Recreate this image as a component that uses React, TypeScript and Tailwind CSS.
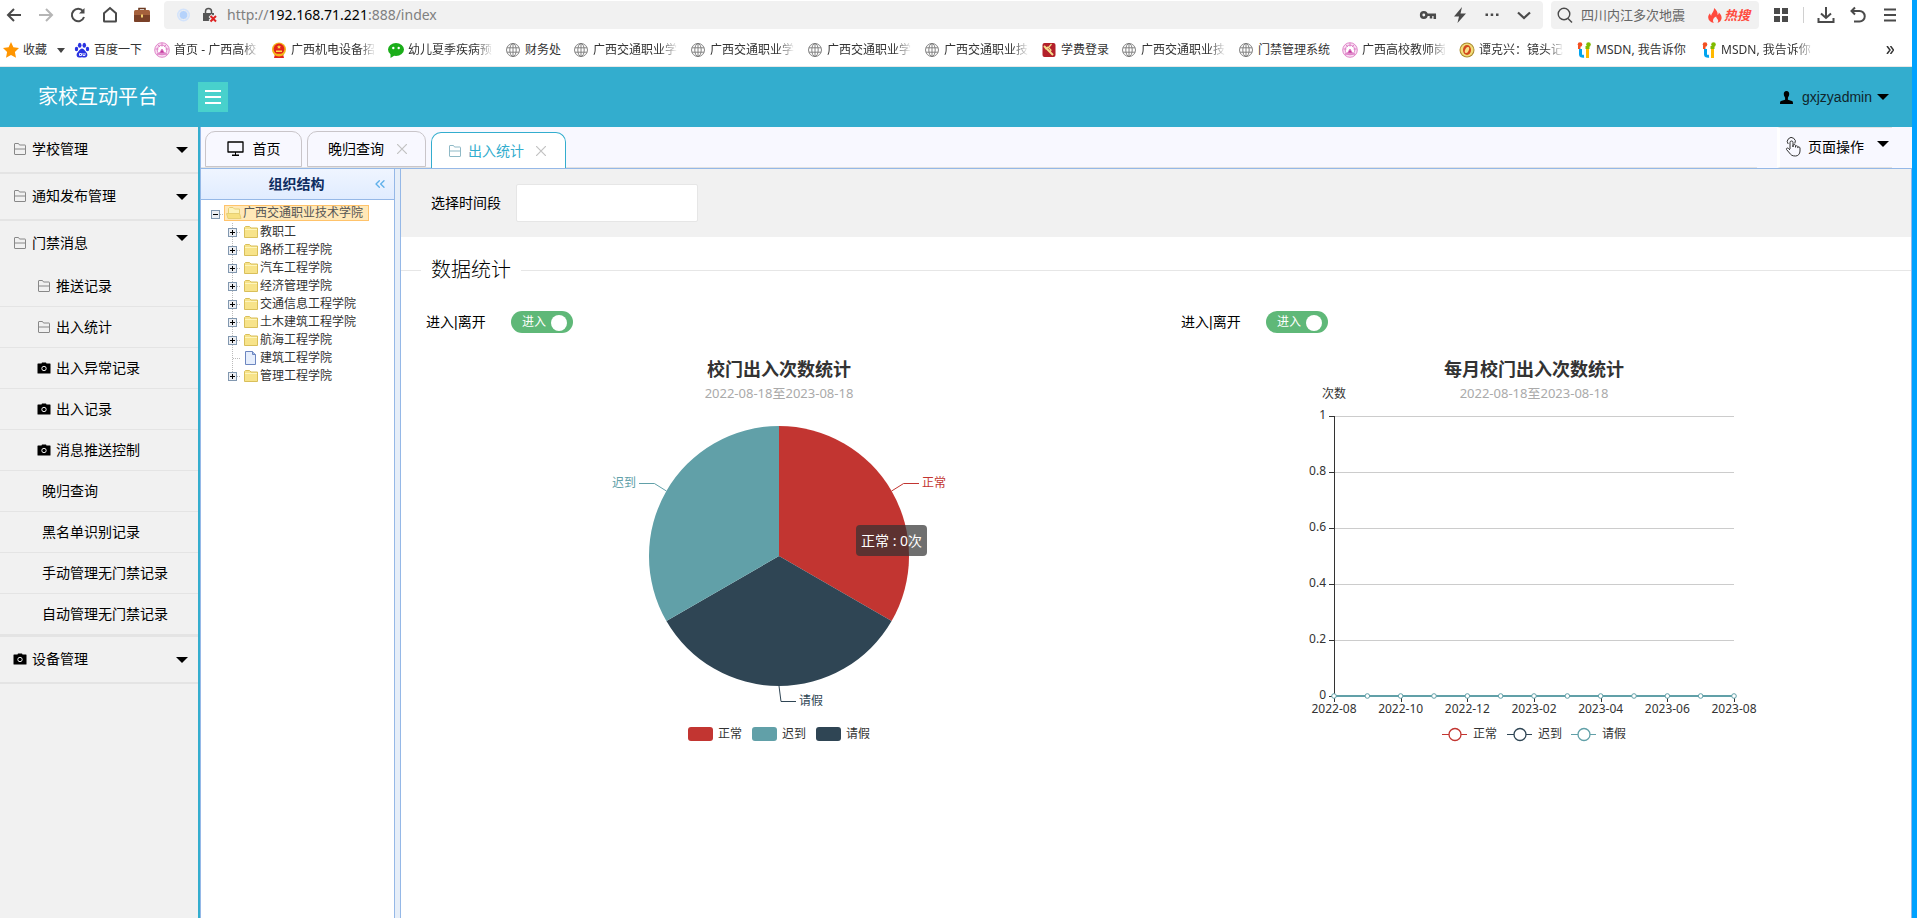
import { useState } from 'react';
import type { ReactNode } from 'react';
import clsx from 'clsx';
import { ChevronsLeft } from 'lucide-react';

type MenuItem = { label: string; icon?: 'folder' | 'camera' };

const SUB_MENU: MenuItem[] = [
  { label: '推送记录', icon: 'folder' },
  { label: '出入统计', icon: 'folder' },
  { label: '出入异常记录', icon: 'camera' },
  { label: '出入记录', icon: 'camera' },
  { label: '消息推送控制', icon: 'camera' },
  { label: '晚归查询' },
  { label: '黑名单识别记录' },
  { label: '手动管理无门禁记录' },
  { label: '自动管理无门禁记录' },
];

const DEPARTMENTS = [
  { name: '教职工' },
  { name: '路桥工程学院' },
  { name: '汽车工程学院' },
  { name: '经济管理学院' },
  { name: '交通信息工程学院' },
  { name: '土木建筑工程学院' },
  { name: '航海工程学院' },
  { name: '建筑工程学院', leaf: true },
  { name: '管理工程学院' },
];

type Site = 'baidu' | 'pink' | 'emblem' | 'wechat' | 'globe' | 'tuition' | 'gold' | 'msdn';

const BOOKMARKS: { icon: Site; label: string; cut?: boolean }[] = [
  { icon: 'baidu', label: '百度一下' },
  { icon: 'pink', label: '首页 - 广西高校', cut: true },
  { icon: 'emblem', label: '广西机电设备招', cut: true },
  { icon: 'wechat', label: '幼儿夏季疾病预', cut: true },
  { icon: 'globe', label: '财务处' },
  { icon: 'globe', label: '广西交通职业学', cut: true },
  { icon: 'globe', label: '广西交通职业学', cut: true },
  { icon: 'globe', label: '广西交通职业学', cut: true },
  { icon: 'globe', label: '广西交通职业技', cut: true },
  { icon: 'tuition', label: '学费登录' },
  { icon: 'globe', label: '广西交通职业技', cut: true },
  { icon: 'globe', label: '门禁管理系统' },
  { icon: 'pink', label: '广西高校教师岗', cut: true },
  { icon: 'gold', label: '谭克兴：镜头记', cut: true },
  { icon: 'msdn', label: 'MSDN, 我告诉你' },
  { icon: 'msdn', label: 'MSDN, 我告诉你' },
];

const RED = '#c23531';
const NAVY = '#2f4554';
const TEAL = '#61a0a8';

export default function App() {
  const [menuOpen, setMenuOpen] = useState(true);

  return (
    <div className="flex h-screen flex-col border-r-5 border-[#00a2ff] bg-white font-['Noto_Sans','Noto_Sans_CJK_SC',sans-serif] text-sm text-black">
      <Toolbar />
      <Bookmarks />
      <header className="flex h-15 shrink-0 items-center bg-[#33adce]">
        <h1 className="w-[198px] pl-[38px] text-xl text-white">家校互动平台</h1>
        <button
          aria-label="菜单"
          onClick={() => setMenuOpen(!menuOpen)}
          className="flex size-[30px] items-center justify-center bg-[#48d1cc]"
        >
          <svg width="18" height="16" viewBox="0 0 18 16" fill="#fff">
            <path d="M1 1h16v2H1zM1 7h16v2H1zM1 13h16v2H1z" />
          </svg>
        </button>
        <button className="ml-auto flex items-center pr-[23px] font-['Liberation_Sans',sans-serif] text-[#10262d]">
          <svg width="13" height="13" viewBox="0 0 13 13" className="mr-[9px]" fill="#000">
            <path d="M6.5 0C8.400 0 9.400 1.400 9.200 3.300 9.100 5 8.300 6 7.900 6.800v2L12 10c.800.400 1 1 1 3H0c0-2 .2-2.600 1-3l4.100-1.200v-2C4.700 6 3.900 5 3.800 3.300 3.600 1.400 4.600 0 6.500 0z" />
          </svg>
          gxjzyadmin
          <Caret className="ml-[5px]" />
        </button>
      </header>

      <div className="flex min-h-0 flex-1">
        {menuOpen && <Sidebar />}
        <div className="flex min-w-0 flex-1 flex-col border-l border-[#95b8e7]">
          <Tabs />
          <div className="flex min-h-0 flex-1 border-t border-[#95b8e7]">
            <OrgTree />
            <div className="w-[5px] shrink-0 bg-[#e6eef8]" />
            <Statistics />
          </div>
        </div>
      </div>
    </div>
  );
}

function Caret({ className }: { className?: string }) {
  return (
    <span
      className={clsx(
        'size-0 shrink-0 border-x-6 border-t-6 border-x-transparent border-t-black',
        className
      )}
    />
  );
}

/* ---------- browser bars ---------- */

function Toolbar() {
  return (
    <div className="flex h-[30px] shrink-0 items-center py-px text-[#4a4a4a]">
      <div className="flex w-[164px] shrink-0 items-center gap-[14px] pl-[5px]">
        <BarButton label="后退">
          <path d="M16 9H3M9 3L3 9l6 6" />
        </BarButton>
        <BarButton label="前进" className="text-[#b5b5b5]">
          <path d="M2 9h13M9 3l6 6-6 6" />
        </BarButton>
        <BarButton label="刷新">
          <path d="M14 5.200A6.200 6.200 0 1 0 15 11" />
          <path d="M15.500 2v5.500H10z" fill="currentColor" stroke="none" />
        </BarButton>
        <BarButton label="主页">
          <path d="M3 7.200L9 2l6 5.200V15q0 .5-.5.500h-11Q3 15.500 3 15z" />
        </BarButton>
        <button aria-label="工具箱">
          <svg width="18" height="18" viewBox="0 0 18 18">
            <path d="M6 5V2.500h6V5" fill="none" stroke="#6b3a22" strokeWidth="1.600" />
            <rect x="1" y="4" width="16" height="12" rx="1.500" fill="#a5613c" />
            <path d="M1 9h16v5.500a1.500 1.500 0 0 1-1.500 1.500h-13A1.500 1.500 0 0 1 1 14.500z" fill="#7a4128" />
            <path d="M8 8.500h2v3H8z" fill="#f3cf6e" />
          </svg>
        </button>
      </div>
      <div className="flex h-7 flex-1 items-center rounded bg-[#f1f1f1] pr-[10px]">
        <svg width="16" height="16" viewBox="0 0 16 16" className="ml-3">
          <circle cx="7.500" cy="8" r="6.500" fill="#d3e3fb" />
          <circle cx="7.500" cy="8" r="4.500" fill="#b5d2fb" stroke="#f1f1f1" />
        </svg>
        <svg width="16" height="16" viewBox="0 0 16 16" className="ml-[10px]">
          <path d="M3.500 6V4.500a3 3 0 0 1 6 0V6" fill="none" stroke="#555" strokeWidth="1.500" />
          <path d="M1 6h11v8H1z" fill="#555" />
          <path d="M8 8.500l6 6M14 8.500l-6 6" stroke="#f1f1f1" strokeWidth="4" />
          <path d="M8.500 9l5.500 5.500M14 9l-5.500 5.500" stroke="#d22" strokeWidth="2" />
        </svg>
        <span className="ml-[9px] flex-1 text-sm text-[#808080]">
          http://<span className="text-black">192.168.71.221</span>:888/index
        </span>
        <div className="flex items-center gap-[14px]">
          <BarButton label="密码">
            <g strokeWidth="2.500">
              <circle cx="4.800" cy="9" r="2.700" />
              <path d="M7.500 8.800h9.500M15.800 8.500v4.500M12 8.500v4" />
            </g>
          </BarButton>
          <BarButton label="加速">
            <path d="M11 1L3 10.500h5L6.500 17 15 7.500H9.500z" fill="currentColor" stroke="none" />
          </BarButton>
          <BarButton label="更多">
            <path d="M2.500 7.500H5V10H2.500zM7.700 7.500h2.500V10H7.700zM13 7.500h2.500V10H13z" fill="currentColor" stroke="none" />
          </BarButton>
          <BarButton label="展开">
            <path d="M3 6.500l6 5.500 6-5.500" strokeWidth="2.200" />
          </BarButton>
        </div>
      </div>
      <div className="ml-2 flex h-7 w-[208px] items-center rounded bg-[#f1f1f1] pl-[5px]">
        <BarButton label="搜索">
          <g strokeWidth="1.400">
            <circle cx="8" cy="8" r="5.800" />
            <path d="M12 12.500l4 4" />
          </g>
        </BarButton>
        <span className="ml-[7px] text-[13px] text-[#666]">四川内江多次地震</span>
        <span className="ml-auto flex items-center gap-0.5 pr-[9px] text-[13px] font-bold text-[#ff4a3d] italic">
          <svg width="14" height="15" viewBox="0 0 14 15" fill="#ff4a3d">
            <path d="M6 0c2.500 2 4 4.200 3.600 7 .8-.500 1.200-1.500 1.200-2.500C13 6.500 14 8.500 13.500 10.800c-.5 2.200-2 3.600-4 4.200 1-1.500 1-3-.3-4.200-.6-.600-1-1.400-1-2.300C6 9.500 5 11 5 12.500c0 1 .3 1.800.8 2.500C2.500 14.500.3 12.300.2 9.500.1 7.800.9 6.500 2 5.300c.1 1.200.5 2 1.200 2.500C3.400 5 6.300 3.500 6 0z" />
          </svg>
          热搜
        </span>
      </div>
      <div className="flex items-center px-[13px]">
        <BarButton label="应用">
          <path d="M2 2h6v6H2zM10 2h6v6h-6zM2 10h6v6H2zM10 10h6v6h-6z" fill="currentColor" stroke="none" />
        </BarButton>
        <span className="mx-[13px] h-4 w-px bg-[#d0d0d0]" />
        <div className="flex items-center gap-[14px]">
          <BarButton label="下载">
            <path d="M9 1v11M4 7.500L9 12l5-4.500M1.500 12v4h15v-4" />
          </BarButton>
          <BarButton label="恢复">
            <path d="M6 1.500L2.500 5 6 8.500M3 5h7.500a5 5 0 0 1 0 10.500H5" />
          </BarButton>
          <BarButton label="浏览器菜单">
            <path d="M3 3.500h12M3 9h12M3 14.500h12" />
          </BarButton>
        </div>
      </div>
    </div>
  );
}

function BarButton({ label, className, children }: { label: string; className?: string; children: ReactNode }) {
  return (
    <button aria-label={label} className={className}>
      <svg width="18" height="18" viewBox="0 0 18 18" fill="none" stroke="currentColor" strokeWidth="2">
        {children}
      </svg>
    </button>
  );
}

function Bookmarks() {
  return (
    <nav className="flex h-[37px] shrink-0 items-center border-b border-[#e8e8e8] pt-1 pl-[3px] text-xs whitespace-nowrap text-[#333]">
      <button className="mr-[9px] flex items-center gap-1">
        <svg width="16" height="16" viewBox="0 0 16 16" fill="#ff9500">
          <path d="M8 0l2.400 5.300 5.600.700-4.100 3.900 1.100 5.800L8 12.900l-5 2.800 1.100-5.800L0 6l5.600-.700z" />
        </svg>
        收藏
        <span className="ml-[6px] border-x-4 border-t-5 border-x-transparent border-t-[#444]" />
      </button>
      <div className="flex items-center gap-3">
        {BOOKMARKS.map((b, i) => (
          <a key={i} href="#" className="flex items-center gap-1">
            <SiteIcon site={b.icon} />
            <span
              className={clsx(
                'overflow-hidden',
                b.cut && 'w-[85px] mask-r-from-80% mask-r-to-100%',
                b.icon === 'msdn' && 'w-[93px]',
                i === BOOKMARKS.length - 1 && 'mask-r-from-80% mask-r-to-100%'
              )}
            >
              {b.label}
            </span>
          </a>
        ))}
      </div>
      <button aria-label="更多书签" className="mr-[18px] ml-auto">
        <svg width="8" height="8" viewBox="0 0 8 8" fill="none" stroke="#333" strokeWidth="1.500">
          <path d="M1 0l3 4-3 4M4.500 0l3 4-3 4" />
        </svg>
      </button>
    </nav>
  );
}

function SiteIcon({ site }: { site: Site }) {
  return (
    <svg width="16" height="16" viewBox="0 0 16 16" className="shrink-0">
      {site === 'globe' && (
        <g fill="none" stroke="#777" strokeWidth=".9">
          <circle cx="8" cy="8" r="6.500" />
          <ellipse cx="8" cy="8" rx="3.200" ry="6.500" />
          <path d="M8 1.500v13M2 5.800h12M2 10.200h12" />
        </g>
      )}
      {site === 'baidu' && (
        <g fill="#2932e1">
          <ellipse cx="5.700" cy="3.200" rx="1.800" ry="2.500" />
          <ellipse cx="10.300" cy="3.200" rx="1.800" ry="2.500" />
          <ellipse cx="2.500" cy="7" rx="1.700" ry="2.300" />
          <ellipse cx="13.500" cy="7" rx="1.700" ry="2.300" />
          <path d="M8 6.500c2 0 3 2.500 4.500 4 1.600 1.700 1 5-1.500 5-1.200 0-2-.300-3-.300s-1.800.300-3 .300c-2.500 0-3.100-3.300-1.500-5C5 9 6 6.500 8 6.500z" />
          <path d="M5.500 11.500h2v2h-2zM9 11v2.500h2V11" fill="none" stroke="#fff" strokeWidth=".9" />
        </g>
      )}
      {site === 'pink' && (
        <g fill="none" stroke="#dc7cc4" strokeWidth=".9">
          <circle cx="8" cy="8" r="7.300" fill="#f9e0f3" />
          <circle cx="8" cy="8" r="4.800" fill="#fff" />
          <path d="M4 3l2 2M12 3l-2 2M8 1v3.500M1.500 7h3M14.500 7h-3" />
          <path d="M5.500 11L8 7l2.500 4z" fill="#c13a9c" />
          <path d="M3 12h10" strokeWidth="1.500" />
        </g>
      )}
      {site === 'emblem' && (
        <g>
          <path d="M4 12h8l1 4H3z" fill="#e2231a" />
          <circle cx="8" cy="7.500" r="7" fill="#f4b41a" />
          <circle cx="8" cy="7" r="5.400" fill="#e2231a" />
          <path d="M8 3l.6 1.300 1.400.1-1 1 .3 1.400L8 6.100l-1.300.700.3-1.400-1-1 1.400-.1zM5 8.500h6V10H5z" fill="#ffd84a" />
          <path d="M4 12.500h8" stroke="#f4b41a" strokeWidth="1.500" />
        </g>
      )}
      {site === 'wechat' && (
        <g>
          <ellipse cx="8" cy="7.500" rx="8" ry="6.500" fill="#1aad19" />
          <path d="M2.500 11v5l4-2.500z" fill="#1aad19" />
          <circle cx="5.300" cy="6" r="1.200" fill="#fff" />
          <circle cx="10.700" cy="6" r="1.200" fill="#fff" />
        </g>
      )}
      {site === 'tuition' && (
        <g>
          <rect x="1.500" y="1" width="13" height="14" rx="2" fill="#b3202a" />
          <path d="M3 4l9 9" stroke="#f5dd8c" strokeWidth="2" />
          <path d="M4 7l3-2 3 3-1 2M10.500 2L8 5" stroke="#f5dd8c" strokeWidth="1.200" fill="none" />
        </g>
      )}
      {site === 'gold' && (
        <g>
          <circle cx="8" cy="8" r="7.500" fill="#a98a2e" />
          <circle cx="8" cy="8" r="6.500" fill="#f1dc7a" />
          <ellipse cx="8" cy="8" rx="4" ry="5" fill="#d2491d" />
          <ellipse cx="8" cy="8" rx="1.800" ry="3.200" fill="#f7e08a" transform="rotate(25 8 8)" />
        </g>
      )}
      {site === 'msdn' && (
        <g fill="none" strokeWidth="3">
          <circle cx="4" cy="2.500" r="2.300" fill="#f25022" stroke="none" />
          <circle cx="12.500" cy="2.500" r="2.300" fill="#7fba00" stroke="none" />
          <path d="M2 5.500h2.500" stroke="#f25022" />
          <path d="M9.500 5.500h4" stroke="#7fba00" />
          <path d="M4.500 7v5.500c0 1.500 1 2 3.500 1.800" stroke="#00a4ef" />
          <path d="M11.500 7v9" stroke="#ffb900" />
        </g>
      )}
    </svg>
  );
}

/* ---------- left menu ---------- */

function FolderIcon({ className, size = 14 }: { className?: string; size?: number }) {
  return (
    <svg width={size} height={size} viewBox="0 0 14 14" fill="none" stroke="currentColor" className={className}>
      <path d="M1.500 12V2q0-.500.500-.500h3.500l1 1.500H12q.5 0 .5.500V12q0 .500-.5.500H2q-.5 0-.5-.500zM1.500 7h11" />
    </svg>
  );
}

function CameraIcon() {
  return (
    <svg width="14" height="12" viewBox="0 0 14 12">
      <path d="M4.500 1.500L5 .5h4l.5 1H13q.5 0 .5.500v9q0 .5-.5.500H1q-.5 0-.5-.500V2q0-.5.500-.500z" />
      <circle cx="7" cy="6.500" r="2.200" fill="none" stroke="#f1f1f1" />
    </svg>
  );
}

function MenuIcon({ icon }: { icon: MenuItem['icon'] }) {
  return icon === 'camera' ? <CameraIcon /> : <FolderIcon className="text-[#888]" />;
}

function MenuTitle({ label, icon, open }: MenuItem & { open?: boolean }) {
  return (
    <button
      className={clsx(
        'flex w-full justify-between pr-[10px] pl-[13px]',
        open ? 'h-[45px]' : 'h-[47px] border-b-2 border-[#e4e4e4]'
      )}
    >
      <span className="flex h-[43px] items-center gap-[5px]">
        <MenuIcon icon={icon} />
        {label}
      </span>
      <Caret className={open ? 'mt-[14px]' : 'mt-5'} />
    </button>
  );
}

function Sidebar() {
  return (
    <aside className="w-[200px] shrink-0 overflow-hidden border-r-2 border-[#33adce] bg-[#f1f1f1]">
      <MenuTitle label="学校管理" icon="folder" />
      <MenuTitle label="通知发布管理" icon="folder" />
      <MenuTitle label="门禁消息" icon="folder" open />
      <ul className="border-b-2 border-[#e4e4e4]">
        {SUB_MENU.map((item) => (
          <li key={item.label} className="h-[41px] border-b border-[#e4e4e4]">
            <a href="#" className={clsx('flex h-full items-center gap-[5px]', item.icon ? 'pl-[37px]' : 'pl-[42px]')}>
              {item.icon && <MenuIcon icon={item.icon} />}
              {item.label}
            </a>
          </li>
        ))}
      </ul>
      <MenuTitle label="设备管理" icon="camera" />
    </aside>
  );
}

/* ---------- tabs ---------- */

function CloseIcon() {
  return (
    <svg width="10" height="10" viewBox="0 0 10 10" stroke="#c2c2c2" strokeWidth="1.200">
      <path d="M0 0l10 10M10 0L0 10" />
    </svg>
  );
}

function Tabs() {
  const tab = 'flex h-9 items-center rounded-t-[10px] border border-[#c9c5c9]';
  return (
    <div className="flex h-[41px] shrink-0 items-end bg-[#f8f8ff]">
      <div className="flex flex-1 items-end gap-[5px] border-b border-[#e2e2e2] pl-1">
        <button className={clsx(tab, 'w-[97px] justify-center gap-[9px]')}>
          <svg width="17" height="16" viewBox="0 0 17 16">
            <path d="M1 1h15v10H1z" fill="none" stroke="#000" strokeWidth="1.300" strokeLinejoin="round" />
            <path d="M8 11h1v2.500h3V15H5v-1.500h3z" />
          </svg>
          首页
        </button>
        <button className={clsx(tab, 'w-[119px] gap-[13px] pl-5')}>
          晚归查询
          <CloseIcon />
        </button>
        <button className="-mb-px flex h-9 w-[135px] items-center rounded-t-[10px] border border-b-0 border-[#33adce] bg-white pl-4 text-[#33adce]">
          <FolderIcon className="text-[#8fb9c6]" />
          <span className="mr-3 ml-[6px]">出入统计</span>
          <CloseIcon />
        </button>
      </div>
      <button className="mr-5 ml-5 flex h-full items-center border-y border-l-3 border-[#e2e2e2] border-l-white pr-[3px] pb-0.5 pl-[5px]">
        <svg width="16" height="20" viewBox="0 0 16 20" fill="none" stroke="#333" className="mr-[7px]">
          <path d="M5 12V5.500a1.500 1.500 0 0 1 3 0V10M8 10V8.500a1.300 1.300 0 0 1 2.500 0V10.500M10.500 9.500a1.300 1.300 0 0 1 2.300 0v1.500M12.800 10.500a1.200 1.200 0 0 1 2.200.5v3c0 3-2 5-4.500 5C7 19 6 18 4.500 16L1.500 12.500c-.6-1 .8-2 1.800-1.200L5 13" />
          <path d="M3.200 7A4 4 0 1 1 9.800 6.500" />
        </svg>
        页面操作
        <Caret className="-mt-1.5 ml-[13px]" />
      </button>
    </div>
  );
}

/* ---------- organisation tree ---------- */

function TreeHit({ kind, last }: { kind: 'open' | 'closed' | 'leaf'; last?: boolean }) {
  return (
    <svg width="16" height="18" viewBox="0 0 16 18" className="shrink-0">
      {kind !== 'open' && (
        <path d={last ? 'M7.500 0v9' : 'M7.500 0v18'} stroke="#bbb" strokeDasharray="1 1" fill="none" />
      )}
      <path d="M8 9.500h8" stroke="#bbb" strokeDasharray="1 1" />
      {kind !== 'leaf' && (
        <>
          <rect x="3.500" y="5.500" width="8" height="8" fill="#eceef2" stroke="#8298b0" />
          <path d={kind === 'open' ? 'M5 9.500h5' : 'M5 9.500h5M7.500 7v5'} stroke="#000" />
        </>
      )}
    </svg>
  );
}

function TreeIcon({ kind }: { kind: 'open' | 'closed' | 'leaf' }) {
  return (
    <svg width="18" height="16" viewBox="0 0 18 16" className="shrink-0">
      {kind === 'leaf' && (
        <g stroke="#6c86c0">
          <path d="M3.500 1.500h7l3 3v10h-10z" fill="#e6eefc" />
          <path d="M10.500 1.500v3h3" fill="#a9bfe8" />
        </g>
      )}
      {kind === 'closed' && (
        <g stroke="#d9bf5a">
          <path d="M2.500 13.500v-10l1-1h4l1.500 1.500h6.500v9.500z" fill="#f7e38a" />
          <path d="M3 5.500h12" stroke="#fdf5bd" />
        </g>
      )}
      {kind === 'open' && (
        <g stroke="#e6cf74">
          <path d="M3.500 12V3.500l1-1h3.500l1.500 1.500h5v8z" fill="#fdf3ba" />
          <path d="M1.500 8.500h13l1.500 5H3z" fill="#f7e080" />
        </g>
      )}
    </svg>
  );
}

function OrgTree() {
  return (
    <section className="flex w-[194px] shrink-0 flex-col border-r border-[#95b8e7] bg-white">
      <div className="flex h-[31px] items-center border-b border-[#95b8e7] bg-linear-to-b from-[#eff5ff] to-[#e0ecff] pr-[6px] pl-5">
        <h2 className="flex-1 text-center text-sm font-bold text-[#0e2d5f]">组织结构</h2>
        <button aria-label="折叠">
          <ChevronsLeft size={16} strokeWidth={2} color="#5fb0ea" />
        </button>
      </div>
      <ul className="pt-[5px] pl-[7px] text-xs text-[#333]">
        <li>
          <div className="flex h-[18px] items-start">
            <TreeHit kind="open" />
            <span className="flex h-4 items-center border border-[#ffc36b] bg-[#ffe8b8] pr-[5px] text-[#555]">
              <TreeIcon kind="open" />
              广西交通职业技术学院
            </span>
          </div>
          <ul className="pl-[17px]">
            {DEPARTMENTS.map((d, i) => (
              <li key={d.name} className="flex h-[18px] items-center">
                <TreeHit kind={d.leaf ? 'leaf' : 'closed'} last={i === DEPARTMENTS.length - 1} />
                <span className="flex items-center pl-px">
                  <TreeIcon kind={d.leaf ? 'leaf' : 'closed'} />
                  {d.name}
                </span>
              </li>
            ))}
          </ul>
        </li>
      </ul>
    </section>
  );
}

/* ---------- statistics ---------- */

function Statistics() {
  return (
    <main className="min-w-0 flex-1 overflow-hidden border-x border-[#95b8e7] bg-white">
      <div className="flex h-[68px] items-center bg-[#f1f1f1] pl-[30px]">
        <label htmlFor="range">选择时间段</label>
        <input
          id="range"
          type="text"
          className="ml-[15px] h-[38px] w-[182px] rounded-xs border border-[#e6e6e6] bg-white px-2 outline-none"
        />
      </div>
      <div className="mt-[18px] flex items-center">
        <span className="h-px w-5 bg-[#e6e6e6]" />
        <h2 className="px-[10px] text-xl leading-[30px] font-light">数据统计</h2>
        <span className="h-px flex-1 bg-[#e6e6e6]" />
      </div>
      <div className="mt-[18px] grid grid-cols-2">
        <div>
          <Direction id="dir-total" />
          <PieChart />
        </div>
        <div>
          <Direction id="dir-month" />
          <MonthChart />
        </div>
      </div>
    </main>
  );
}

function Direction({ id }: { id: string }) {
  const [entering, setEntering] = useState(true);
  return (
    <div className="flex h-[38px] items-center pl-[25px]">
      <label htmlFor={id} className="w-[85px] font-['Liberation_Sans','Noto_Sans_CJK_SC',sans-serif]">
        进入|离开
      </label>
      <span
        className={clsx(
          'relative flex h-[22px] w-[62px] items-center rounded-full px-[11px] text-xs text-white',
          entering ? 'bg-[#5fb878]' : 'justify-end bg-[#bbb]'
        )}
      >
        {entering ? '进入' : '离开'}
        <span className={clsx('absolute top-1 size-4 rounded-full bg-white', entering ? 'right-[6px]' : 'left-[6px]')} />
        <input
          id={id}
          type="checkbox"
          role="switch"
          checked={entering}
          onChange={(e) => setEntering(e.target.checked)}
          className="absolute inset-0 cursor-pointer opacity-0"
        />
      </span>
    </div>
  );
}

function ChartTitle({ children }: { children: ReactNode }) {
  return (
    <>
      <text x="251" y="20" textAnchor="middle" className="fill-[#333] text-lg font-bold">
        {children}
      </text>
      <text x="251" y="42" textAnchor="middle" className="fill-[#aaa] text-[13px]">
        2022-08-18至2023-08-18
      </text>
    </>
  );
}

function PieChart() {
  const legend = [
    { name: '正常', color: RED, x: 160 },
    { name: '迟到', color: TEAL, x: 224 },
    { name: '请假', color: NAVY, x: 288 },
  ];
  return (
    <div className="relative mx-auto mt-[15px] w-[501px]">
      <svg width="501" height="400" viewBox="0 0 501 400" className="block text-xs">
        <ChartTitle>校门出入次数统计</ChartTitle>
        <path d="M251 200V70A130 130 0 0 1 363.600 265z" fill={RED} />
        <path d="M251 200L363.600 265A130 130 0 0 1 138.400 265z" fill={NAVY} />
        <path d="M251 200L138.400 265A130 130 0 0 1 251 70z" fill={TEAL} />
        <g fill="none">
          <path d="M363.600 135l12-7.500H391" stroke={RED} />
          <path d="M138.400 135l-12-7.500H111" stroke={TEAL} />
          <path d="M251 330l2 15.500h15" stroke={NAVY} />
        </g>
        <text x="394" y="131" fill={RED}>正常</text>
        <text x="84" y="131" fill={TEAL}>迟到</text>
        <text x="271" y="349" fill={NAVY}>请假</text>
        {legend.map((l) => (
          <g key={l.name}>
            <rect x={l.x} y="371" width="25" height="14" rx="3" fill={l.color} />
            <text x={l.x + 30} y="382" fill="#333">{l.name}</text>
          </g>
        ))}
      </svg>
      <div className="absolute top-[169px] left-[328px] rounded bg-[#323232]/70 p-[5px] text-sm leading-[21px] whitespace-nowrap text-white">
        正常 : 0次
      </div>
    </div>
  );
}

function MonthChart() {
  const ticks = ['1', '0.8', '0.6', '0.4', '0.2', '0'];
  const months = ['2022-08', '2022-10', '2022-12', '2023-02', '2023-04', '2023-06', '2023-08'];
  const legend = [
    { name: '正常', color: RED, x: 160 },
    { name: '迟到', color: NAVY, x: 225 },
    { name: '请假', color: TEAL, x: 289 },
  ];
  return (
    <svg width="501" height="400" viewBox="0 0 501 400" className="mx-auto mt-[15px] block overflow-visible text-xs">
      <ChartTitle>每月校门出入次数统计</ChartTitle>
      <text x="51" y="42" textAnchor="middle" fill="#333">次数</text>
      {ticks.map((t, i) => (
        <g key={t}>
          <path d={`M51 ${60.5 + i * 56}h400`} stroke="#ccc" />
          <path d={`M46 ${60.5 + i * 56}h5`} stroke="#333" />
          <text x="43" y={63 + i * 56} textAnchor="end" fill="#333">{t}</text>
        </g>
      ))}
      <path d="M51.500 60v281" stroke="#333" />
      {months.map((m, i) => (
        <g key={m}>
          <path d={`M${Math.round((i * 400) / 6) + 51.5} 341v5`} stroke="#333" />
          <text x={51 + (i * 400) / 6} y="357" textAnchor="middle" fill="#333">{m}</text>
        </g>
      ))}
      <path d="M51 340h400" stroke={TEAL} strokeWidth="2" />
      {Array.from({ length: 13 }, (_, i) => (
        <circle key={i} cx={51 + (i * 400) / 12} cy="340" r="2.300" fill="#fff" stroke={TEAL} />
      ))}
      {legend.map((l) => (
        <g key={l.name}>
          <path d={`M${l.x - 1} 378.500h25`} stroke={l.color} />
          <circle cx={l.x + 12} cy="378.500" r="6" fill="#fff" stroke={l.color} strokeWidth="1.300" />
          <text x={l.x + 30} y="382" fill="#333">{l.name}</text>
        </g>
      ))}
    </svg>
  );
}
